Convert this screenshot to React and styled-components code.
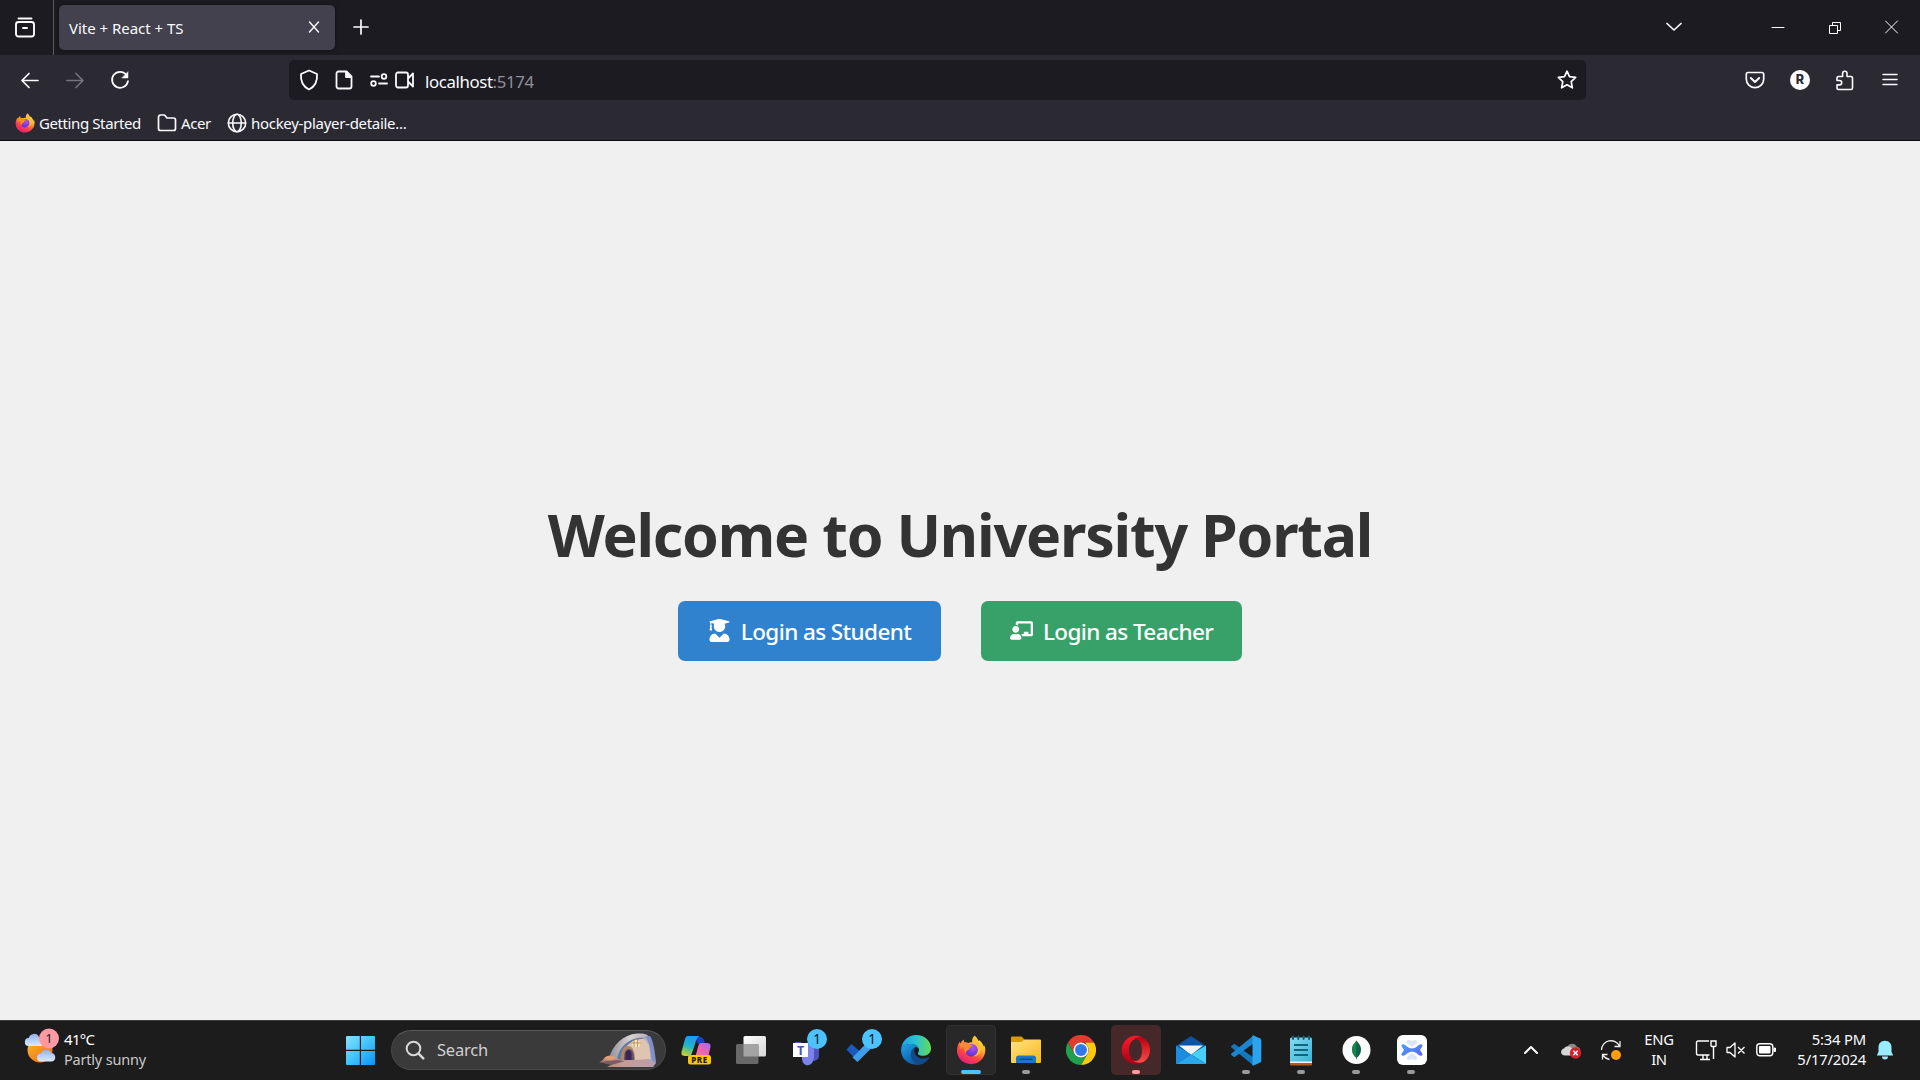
import React from 'react';
import styled, { createGlobalStyle } from 'styled-components';
import { FaUserGraduate, FaChalkboardTeacher } from 'react-icons/fa';

const GlobalStyle = createGlobalStyle`
  * { box-sizing: border-box; }
  body { margin: 0; background: #f0f0f0; font-family: "Noto Sans", "Open Sans", sans-serif; }
  svg { display: block; flex: none; }
`;

const Screen = styled.div`
  width: 1920px;
  height: 1080px;
  display: flex;
  flex-direction: column;
  overflow: hidden;
`;

const Label = styled.span`
  font-size: ${(p) => p.$size || 15}px;
  letter-spacing: ${(p) => p.$track || 0}px;
  line-height: ${(p) => p.$line || 20}px;
  color: ${(p) => p.$color || '#fbfbfe'};
  white-space: nowrap;
`;

/* ---------- browser chrome ---------- */
const TabStrip = styled.header`
  height: 55px;
  flex: none;
  display: flex;
  align-items: center;
  background: #1c1b22;
`;
const Cell = styled.div`
  width: ${(p) => p.$w}px;
  height: ${(p) => p.$h || 40}px;
  flex: none;
  display: flex;
  align-items: center;
  justify-content: center;
`;
const TopCell = styled(Cell)`
  padding-bottom: 1px;
`;
const ViewCell = styled(Cell)`
  height: 55px;
  padding-right: 3px;
  border-right: 1px solid #5b5a63;
`;
const Tab = styled.div`
  width: 276px;
  height: 45px;
  margin-left: 5px;
  padding: 0 11px 0 10px;
  border-radius: 5px;
  display: flex;
  align-items: center;
  justify-content: space-between;
  background: #42414d;
  box-shadow: 0 0 4px rgba(0, 0, 0, 0.5);
`;
const Spacer = styled.div`
  flex: 1;
`;
const NavBar = styled.nav`
  height: 50px;
  flex: none;
  display: flex;
  align-items: center;
  padding-left: 7px;
  padding-right: 9px;
  background: #2b2a33;
`;
const UrlBar = styled.div`
  width: 1297px;
  height: 40px;
  margin-left: 147px;
  padding-left: 2px;
  border-radius: 5px;
  display: flex;
  align-items: center;
  background: #1c1b22;
`;
const Url = styled(Label)`
  margin-left: 13px;
  padding-top: 3px;
  span { color: #8f8f98; }
`;
const Bookmarks = styled.div`
  height: 36px;
  flex: none;
  display: flex;
  align-items: flex-start;
  padding: 8px 0 0 15px;
  gap: 16px;
  background: #2b2a33;
  border-bottom: 1px solid #0c0c0d;
`;
const Bookmark = styled.div`
  display: flex;
  align-items: center;
  height: 20px;
  gap: 4px;
  width: ${(p) => p.$w}px;
`;

/* ---------- page ---------- */
const Page = styled.main`
  flex: 1;
  display: flex;
  flex-direction: column;
  align-items: center;
  padding-top: 348px;
  background: #f0f0f0;
`;
const Title = styled.h1`
  margin: 0;
  font-size: 59px;
  line-height: 90px;
  font-weight: 700;
  letter-spacing: -1.2px;
  color: #333;
  white-space: nowrap;
`;
const Actions = styled.div`
  display: flex;
  gap: 40px;
  margin-top: 22px;
`;
const LoginButton = styled.button`
  width: ${(p) => p.$w}px;
  height: 60px;
  padding: 0;
  border: 0;
  border-radius: 7px;
  display: flex;
  align-items: center;
  justify-content: center;
  gap: 10px;
  background: ${(p) => p.$bg};
  color: #fff;
  font: 500 22.5px/30px "Noto Sans", "Open Sans", sans-serif;
  letter-spacing: -0.6px;
  white-space: nowrap;
  svg { margin-bottom: 1px; }
  span { padding-top: 2px; }
`;

/* ---------- taskbar ---------- */
const Taskbar = styled.footer`
  height: 60px;
  flex: none;
  display: flex;
  align-items: center;
  background: #1c1c1c;
  box-shadow: inset 0 1px 0 #3b3c3b;
`;
const Weather = styled.div`
  width: 335px;
  padding-left: 24px;
  display: flex;
  align-items: center;
  gap: 4px;
  > svg { margin-bottom: 9px; }
`;
const Stack = styled.div`
  display: flex;
  flex-direction: column;
  padding-bottom: 3px;
  align-items: ${(p) => p.$align || 'flex-start'};
  width: ${(p) => (p.$w ? p.$w + 'px' : 'auto')};
`;
const Search = styled.div`
  width: 275px;
  height: 40px;
  margin: 0 5px 0 6px;
  padding: 0 8px 0 13px;
  border-radius: 20px;
  border: 1px solid #484848;
  border-top-color: #5a5a5a;
  display: flex;
  align-items: center;
  background: #3a3a3a;
`;
const SearchText = styled(Label)`
  margin-left: 12px;
  flex: 1;
`;
const Apps = styled.div`
  display: flex;
  gap: 5px;
`;
const AppTile = styled.div`
  position: relative;
  width: 50px;
  height: 50px;
  border-radius: 5px;
  display: flex;
  align-items: center;
  justify-content: center;
  background: ${(p) => p.$bg || 'transparent'};
  box-shadow: ${(p) => (p.$ring ? 'inset 0 0 0 1px #333' : 'none')};
`;
const Running = styled.i`
  position: absolute;
  bottom: 1px;
  left: 50%;
  width: ${(p) => p.$w || 8}px;
  height: 4px;
  border-radius: 2px;
  transform: translateX(-50%);
  background: ${(p) => p.$c || '#9a9a9a'};
`;
const Tray = styled.div`
  margin-left: 75px;
  display: flex;
  align-items: center;
`;

const Line = ({ w, h = w, vb, sw = 1.6, color = '#fbfbfe', children }) => (
  <svg width={w} height={h} viewBox={vb || `0 0 ${w} ${h}`} fill="none" stroke={color} strokeWidth={sw} strokeLinecap="round" strokeLinejoin="round">
    {children}
  </svg>
);

const Firefox = ({ size, id }) => (
  <svg width={size} height={size} viewBox="0 0 30 30">
    <defs>
      <linearGradient id={id + 'a'} x1=".8" y1="0" x2=".25" y2="1">
        <stop offset="0" stopColor="#fff44f" />
        <stop offset=".35" stopColor="#ffb02e" />
        <stop offset=".65" stopColor="#ff4a3f" />
        <stop offset="1" stopColor="#e31587" />
      </linearGradient>
      <radialGradient id={id + 'b'} cx=".6" cy=".3" r=".8">
        <stop offset="0" stopColor="#a655f5" />
        <stop offset="1" stopColor="#592acb" />
      </radialGradient>
    </defs>
    <path fill={`url(#${id}a)`} d="M18.7.8c2 1.7 3 3.2 3.7 5.3l1-.8c2.2 2 3.8 4.200 4.700 7 .3-.8.3-1.500.2-2.400 1 2 1.200 4.200.9 6.700C28.400 24 22.500 29.200 15 29.200 7.300 29.200 1 23.600 1 15.600c0-3.700 1.100-6.500 2.800-9 0 .9.1 1.600.4 2.200C5.200 7 6.300 5.600 7.700 4.600c-.1 1 .2 2 .8 2.900 1.400-.2 2.600 0 3.700.5 1.500-.8 3-.9 4.300-.6-.4-2.800.4-5 2.200-6.600z" />
    <circle cx="15.500" cy="15.300" r="6.300" fill={`url(#${id}b)`} />
    <path fill="#ff8a28" d="M3.800 8.600c3-2 6.200-1.700 8.400-.6 1 1.300 2.400 2 4.600 2.300-.3 1.400-2.700 1.700-3.300 2.600-.4.700 0 1.500-1.200 2.100-1.400.700-2.500 1.400-2.300 3.200-2.500-2-2.200-4.200-1-6-1.900-.2-3.400.4-4.600 2z" />
    <path fill="#ffbd35" d="M16.500 7.400c3.700 1 5.700 4 5.500 7.800-.1 3-2.500 5.400-5.500 6 5 .4 8.700-3 8.600-7.300-.1-3.600-2-5.800-3.900-7.700C20.600 4.700 20.100 3 18.700.8c-1.800 1.600-2.800 3.800-2.200 6.600z" />
  </svg>
);

const WeatherIcon = () => (
  <svg width="36" height="38" viewBox="0 0 36 38">
    <defs>
      <linearGradient id="sun" x1="0" y1="0" x2="1" y2="1"><stop stopColor="#f9bd2b" /><stop offset="1" stopColor="#ee6414" /></linearGradient>
      <linearGradient id="cl" x1="0" y1="0" x2="0" y2="1"><stop stopColor="#8fb2ee" /><stop offset="1" stopColor="#dfeafb" /></linearGradient>
    </defs>
    <circle cx="16" cy="23" r="12.500" fill="url(#sun)" />
    <path fill="url(#cl)" d="M5 19a4 4 0 0 1-.3-8A5.500 5.500 0 0 1 15 10l4 9z" />
    <path fill="url(#cl)" d="M17 34.500a4 4 0 0 1 0-8 5.500 5.500 0 0 1 10.300-.5 4.300 4.300 0 0 1 .5 8.500z" />
    <circle cx="25" cy="11.500" r="10" fill="#ff99a4" />
    <text x="25" y="16.200" textAnchor="middle" fontSize="13" fill="#222" fontFamily="Noto Sans, sans-serif">1</text>
  </svg>
);

const StartIcon = () => (
  <svg width="30" height="30" viewBox="0 0 30 30">
    <defs><linearGradient id="win" gradientUnits="userSpaceOnUse" x1="0" y1="0" x2="30" y2="30"><stop stopColor="#8be3ff" /><stop offset=".5" stopColor="#42c5fb" /><stop offset="1" stopColor="#0a93f8" /></linearGradient></defs>
    <path fill="url(#win)" d="M1 2a1 1 0 0 1 1-1H14.800V14.800H1zM16 1H29a1 1 0 0 1 1 1V14.800H16zM1 16H14.800V30H2a1 1 0 0 1-1-1zM16 16H30V29a1 1 0 0 1-1 1H16z" />
  </svg>
);

const DomeArt = () => (
  <svg width="58" height="34" viewBox="0 0 58 34">
    <defs>
      <linearGradient id="dome" x1="0" y1="0" x2="1" y2="0"><stop stopColor="#8f8f9c" /><stop offset=".45" stopColor="#d9d0d0" /><stop offset=".75" stopColor="#bfb4bd" /><stop offset="1" stopColor="#8798cf" /></linearGradient>
      <linearGradient id="sand" x1="0" y1="0" x2="1" y2="0"><stop stopColor="#b97c5d" /><stop offset=".4" stopColor="#c59b94" /><stop offset="1" stopColor="#b79fae" /></linearGradient>
    </defs>
    <path fill="url(#dome)" d="M10 25C14 12 24 1.500 38 .5c10-.5 12.500 1 14 9l5 20-7 1z" />
    <path fill="#667aa6" d="M18 27C20 11 34 3 47 5c-8 1-14 6-17 11l-5 11z" />
    <path fill="#dfc4b2" d="M22 28C23 14 33 5 45 6l5 6 2 17z" />
    <path fill="#7f90c9" d="M46 4c4 3 5 9 7 23l4 3c-1-12-3-23-6-27z" />
    <path fill="#b3885f" d="M22 28c0-9 2-15 7-15s7 6 7 15z" />
    <path fill="#5b5474" d="M25 27c0-7 1-11 5-11s5 4 5 11z" />
    <path fill="#3e2450" d="M26.500 27v-6c0-5 6-5 6 0v6z" />
    <path fill="#f5e6c2" d="M32 9.500l5-3 5 3-2 4.500h-6z" />
    <path stroke="#b88c50" strokeWidth=".9" fill="none" d="M32 10h10M35 7v7M38.500 7v7" />
    <path fill="url(#sand)" d="M0 29c4 0 4-5 9-6 6-1 8 3 13 4h14l14-1 7 4-3 4H8l6-3z" />
    <path fill="#7c5a66" d="M0 29l18-2 8 1-14 4z" />
    <path fill="#e2a079" d="M5 26c2-4 8-4 12-1l-5 2z" />
  </svg>
);

const Copilot = () => (
  <svg width="34" height="34" viewBox="0 0 34 34">
    <defs>
      <linearGradient id="cp1" x1="0.300" y1="0" x2="0" y2="1"><stop stopColor="#1b9cf0" /><stop offset=".45" stopColor="#21b6c4" /><stop offset=".75" stopColor="#8ace50" /><stop offset="1" stopColor="#f3cb28" /></linearGradient>
      <linearGradient id="cp2" x1="1" y1="0" x2="0" y2="1"><stop stopColor="#a06bf5" /><stop offset=".5" stopColor="#ef62b4" /><stop offset="1" stopColor="#ff8a4a" /></linearGradient>
    </defs>
    <path fill="#1543c4" d="M16 4h5c3 0 4 2 5 7h-7z" />
    <path fill="url(#cp1)" d="M9 3h12c-3 1-4 4-5 8l-3 9c-.6 2-2 3-4 3H6c-4 0-4-3-3-6L6 6c.5-2 1.500-3 3-3z" />
    <path fill="url(#cp2)" d="M22 10h6c4 0 4 3 3 6l-2 9H14c3-1 3-4 4-7 1-5 2-8 4-8z" />
    <rect x="9" y="22" width="23" height="9.500" rx="2.500" fill="#ffc800" />
    <text x="20.500" y="29.800" textAnchor="middle" fontSize="8" fontWeight="800" letterSpacing=".5" fill="#221a00" fontFamily="Noto Sans, sans-serif">PRE</text>
  </svg>
);

const TaskView = () => (
  <svg width="32" height="30" viewBox="0 0 32 30">
    <defs><linearGradient id="tv" x1="0" y1="0" x2="1" y2="1"><stop stopColor="#fff" /><stop offset="1" stopColor="#d5d5d5" /></linearGradient></defs>
    <rect x="8.500" y="1" width="22.500" height="20.500" rx="1.500" fill="url(#tv)" />
    <rect x="1" y="9" width="22.500" height="20" rx="1.500" fill="#686868" />
    <path fill="#a4a4a4" d="M8.500 9h15v12.500h-15z" />
  </svg>
);

const CountBadge = ({ x, y }) => (
  <g>
    <circle cx={x} cy={y} r="10" fill="#4cc2ff" />
    <text x={x} y={y + 5} textAnchor="middle" fontSize="13.500" fill="#111" fontFamily="Noto Sans, sans-serif">1</text>
  </g>
);

const Teams = () => (
  <svg width="50" height="50" viewBox="0 0 50 50">
    <path fill="#4b53bc" d="M29 21h9v10c0 3-3 5-7 5z" />
    <path fill="#7b83eb" d="M20 19h13v12c0 12-12 12-12 2z" />
    <rect x="14" y="17" width="6" height="4" fill="#5059c9" />
    <rect x="12" y="18" width="15" height="14" fill="#fff" />
    <text x="19.500" y="29.600" textAnchor="middle" fontSize="12.500" fontWeight="700" fill="#4b53bc" fontFamily="Noto Sans, sans-serif">T</text>
    <CountBadge x={36} y={14} />
  </svg>
);

const Todo = () => (
  <svg width="50" height="50" viewBox="0 0 50 50">
    <path fill="#185abd" d="M15.500 19l-5 5.500 7 7.500 6-6z" />
    <path fill="#3e9eea" d="M16.500 32.500l18-18.500 6 4L21.500 37z" />
    <CountBadge x={36} y={14} />
  </svg>
);

const Edge = () => (
  <svg width="30" height="30" viewBox="0 0 30 30">
    <defs>
      <linearGradient id="e1" x1="0" y1=".5" x2="1" y2=".5"><stop stopColor="#1aa0e8" /><stop offset=".5" stopColor="#2bc3d2" /><stop offset="1" stopColor="#66dc4f" /></linearGradient>
      <linearGradient id="e2" x1="0" y1="0" x2=".6" y2="1"><stop stopColor="#1fa2e9" /><stop offset="1" stopColor="#0c59a4" /></linearGradient>
    </defs>
    <path fill="url(#e1)" d="M.2 13.500C1.200 5.500 7.500 0 15 0c9 0 15 6.300 15 13.200 0 4.600-3.600 7.600-8 7.600-4 0-5.500-1.600-5-2.700.5-1 1-1.500 1-3 0-3.400-3.500-6.100-7.700-6.100C5.500 9 1.700 10.500.2 13.500z" />
    <path fill="url(#e2)" d="M.1 13.800C1.200 10 5.500 8.900 10.300 8.900c4.200 0 7.700 2.700 7.700 6.200 0-2-2-3-3.500-3-5 3-6 15 5 17.400C9 31.500-.9 24.500.1 13.800z" />
    <path fill="#114a8b" d="M14 12.200C7.500 15 8 27.500 18 29.700c4-.4 8-3 10-6.700.3-.6-.2-1-.8-.700-7 3.600-16.500-1-13.200-10.100z" />
  </svg>
);

const Files = () => (
  <svg width="32" height="28" viewBox="0 0 32 28">
    <defs><linearGradient id="fo" x1="0" y1="0" x2="1" y2="1"><stop stopColor="#ffe287" /><stop offset="1" stopColor="#fcb814" /></linearGradient></defs>
    <path fill="#d99a0b" d="M1 1.500a1 1 0 0 1 1-1h9.500l3 3V9H1z" />
    <path fill="url(#fo)" d="M1 6h10.500l3-2.500H30a1 1 0 0 1 1 1V26a1 1 0 0 1-1 1H2a1 1 0 0 1-1-1z" />
    <path fill="#1578c8" d="M6 27v-5a2.500 2.500 0 0 1 2.500-2.500h15A2.500 2.500 0 0 1 26 22v5z" />
    <rect x="9.500" y="22.500" width="13" height="1.500" fill="#0b4d86" />
  </svg>
);

const Chrome = () => (
  <svg width="30" height="30" viewBox="0 0 30 30">
    <path fill="#e33b2e" d="M2 7.500A15 15 0 0 1 28 7.500H15L8.500 18.700z" />
    <path fill="#fdc80f" d="M28 7.500A15 15 0 0 1 15 30l6.500-11.200a7.500 7.500 0 0 0 0-7.500L19 7.500z" />
    <path fill="#1fa04c" d="M15 30A15 15 0 0 1 2 7.500l6.500 11.300A7.500 7.500 0 0 0 15 22.500a7.500 7.500 0 0 0 6.500-3.700z" />
    <circle cx="15" cy="15" r="7.500" fill="#fff" />
    <circle cx="15" cy="15" r="6" fill="#3279ec" />
  </svg>
);

const Opera = () => (
  <svg width="30" height="30" viewBox="0 0 30 30">
    <defs>
      <linearGradient id="op" x1="0" y1="0" x2="0" y2="1"><stop stopColor="#ff1b2d" /><stop offset="1" stopColor="#a70014" /></linearGradient>
      <linearGradient id="op2" x1="0" y1="0" x2="0" y2="1"><stop stopColor="#b9000f" /><stop offset="1" stopColor="#ff4b4b" /></linearGradient>
    </defs>
    <path fill="url(#op)" fillRule="evenodd" d="M15 .7a14.300 14.300 0 1 0 0 28.600c3 0 6-1 8-3V4c-2-2-5-3.300-8-3.300zM16 3.700c4 0 6.500 5 6.500 11.300S20 26.300 16 26.300 8 21.500 8 15 12 3.700 16 3.700z" />
    <path fill="url(#op2)" d="M12 4.500c5-4 10-2 12.500 0a14.300 14.300 0 0 1 0 21c-3.500 3-8.500 3-12.500 0 7 2 9-4 9-10.500S18 2.500 12 4.500z" />
  </svg>
);

const Mail = () => (
  <svg width="30" height="28" viewBox="0 0 30 28">
    <path fill="#0a54a4" d="M0 10L15 0l15 10-6 7H6z" />
    <path fill="#f3f3f3" d="M3 9.500h24L15 19z" />
    <path fill="#1585d9" d="M0 9.500l15 9L0 28z" />
    <path fill="#47d0f8" d="M30 9.500l-15 9L30 28z" />
    <path fill="#2aa6ea" d="M0 28l15-9.500L30 28z" />
    <path fill="#1c8ddf" d="M0 10v18l15-9.500z" />
  </svg>
);

const Code = () => (
  <svg width="31" height="31" viewBox="0 0 31 31">
    <path fill="#1377bd" d="M2.200 9.400L.4 11c-.5.5-.5 1.200 0 1.600L22.500 30.500V22.500L4 9.300c-.6-.4-1.200-.4-1.800.1z" />
    <path fill="#1a86cf" d="M2.200 21.600L.4 20c-.5-.5-.5-1.200 0-1.600L22.500.5V8.500L4 21.700c-.6.4-1.200.4-1.800-.1z" />
    <path fill="#2ba4ef" d="M22.500.4l6.700 3.100c.7.300 1.100 1 1.100 1.700v20.600c0 .7-.4 1.400-1.100 1.700l-6.700 3.100c-.7.200-1-.2-1-.8V1.200c0-.6.300-1 1-.8z" />
  </svg>
);

const Notepad = () => (
  <svg width="24" height="31" viewBox="0 0 24 31">
    <defs><linearGradient id="np" x1="0" y1="0" x2="1" y2="1"><stop stopColor="#83dbf0" /><stop offset="1" stopColor="#3cb4d8" /></linearGradient></defs>
    <path fill="#b05a1c" d="M1 25h22v4.500a1 1 0 0 1-1 1H2a1 1 0 0 1-1-1z" />
    <path fill="#f4f4f4" d="M1 25h22v3H1z" />
    <path fill="url(#np)" d="M1 4a1.500 1.500 0 0 1 1.500-1.500h19A1.500 1.500 0 0 1 23 4v22.500H1z" />
    <path stroke="#11667f" strokeWidth="2" d="M5 10h14M5 15h14M5 20h14" />
    <path stroke="#155f77" strokeWidth="2" strokeLinecap="round" d="M4 1.500v2.500M9.300 1.500v2.500M14.600 1.500v2.500M20 1.500v2.500" />
  </svg>
);

const Mongo = () => (
  <svg width="30" height="30" viewBox="0 0 30 30">
    <circle cx="15.500" cy="15" r="14" fill="#fbfbfb" />
    <path fill="#116149" d="M15.500 5.500c1 2 4.500 4 4.500 9 0 4-2 6.500-4 8l-.5 2.500-.5-2.500c-2-1.500-4-4-4-8 0-5 3.500-7 4.500-9z" />
    <path fill="#13aa52" opacity=".5" d="M15.500 5.500c-1 2-4.500 4-4.500 9 0 4 2 6.500 4 8z" />
  </svg>
);

const Bone = () => (
  <svg width="32" height="30" viewBox="-2 0 32 30">
    <defs><linearGradient id="bo" x1="0" y1="0" x2="1" y2="1"><stop stopColor="#4aa5fb" /><stop offset="1" stopColor="#5c63f2" /></linearGradient></defs>
    <rect width="30" height="30" rx="6" fill="#fff" />
    <path fill="#d8e5fb" d="M15 12l-5-4c-1-3 3-4 5-1.500C17 4 21 5 20 8zM15 18l-5 4c-1 3 3 4 5 1.500C17 26 21 25 20 22z" />
    <path fill="url(#bo)" d="M5 9.500c2-1 3.500.5 5 2 3 2.500 7 2.500 10 0 1.500-1.500 3-3 5-2 1.500 1.500-.5 3-1.500 4.500-.4.700-.4 1.300 0 2 1 1.500 3 3 1.500 4.500-2 1-3.500-.5-5-2-3-2.500-7-2.500-10 0-1.500 1.500-3 3-5 2-1.500-1.500.5-3 1.500-4.500.4-.7.400-1.300 0-2-1-1.500-3-3-1.500-4.500z" />
  </svg>
);

const apps = [
  { icon: <Copilot /> },
  { icon: <TaskView /> },
  { icon: <Teams /> },
  { icon: <Todo /> },
  { icon: <Edge /> },
  { icon: <Firefox size={30} id="fft" />, bg: '#282828', ring: true, run: { w: 20, c: '#4cc2ff' } },
  { icon: <Files />, run: {} },
  { icon: <Chrome /> },
  { icon: <Opera />, bg: '#452829', run: { c: '#ff99a4' } },
  { icon: <Mail /> },
  { icon: <Code />, run: {} },
  { icon: <Notepad />, run: {} },
  { icon: <Mongo />, run: {} },
  { icon: <Bone />, run: {} },
];

export default function App() {
  return (
    <Screen>
      <GlobalStyle />
      <TabStrip>
        <ViewCell $w={54}>
          <Line w={20} h={21} sw={1.9}>
            <path d="M3.500 1.500h13" />
            <rect x="1" y="5" width="18" height="14.500" rx="2.500" />
            <path d="M8 11h4" />
          </Line>
        </ViewCell>
        <Tab>
          <Label $size={15} $track={-0.03}>Vite + React + TS</Label>
          <TopCell $w={20}><Line w={20} sw={1.4}><path d="M5.500 5l9 10M14.500 5l-9 10" /></Line></TopCell>
        </Tab>
        <TopCell $w={52}><Line w={18} sw={1.7}><path d="M9 2v14M2 9h14" /></Line></TopCell>
        <Spacer />
        <TopCell $w={40}><Line w={18} sw={1.7}><path d="M2 5.500l7 6.500 7-6.500" /></Line></TopCell>
        <Cell $w={55} />
        <Cell $w={57}><Line w={14} sw={1}><path d="M1 6.500h12" /></Line></Cell>
        <Cell $w={57}>
          <svg width="14" height="14" fill="none" stroke="#fff"><path d="M1.500 4.500h8v8h-8zM4.500 4.500v-3h8v8h-3" /></svg>
        </Cell>
        <TopCell $w={57}><Line w={14} sw={1}><path d="M.5 1l12 12M12.500 1L.5 13" /></Line></TopCell>
      </TabStrip>

      <NavBar>
        <Cell $w={45}><Line w={20} sw={1.7}><path d="M18 10.500H2.500M9 3.500l-7 7 7 7" /></Line></Cell>
        <Cell $w={45}><Line w={20} sw={1.7} color="#75747b"><path d="M2 10.500h15.500M11 3.500l7 7-7 7" /></Line></Cell>
        <Cell $w={45}>
          <Line w={20} sw={1.7}><path d="M16.500 5A8 8 0 1 0 18 11" /><path d="M18 2v6h-6z" fill="#fbfbfe" strokeWidth=".5" /></Line>
        </Cell>
        <UrlBar>
          <Cell $w={36}><Line w={20} h={22} sw={1.8}><path d="M10 1.500l8 3.500c.6 7-2 12.500-8 15.500C4 17.500 1.400 12 2 5z" /></Line></Cell>
          <Cell $w={34}>
            <Line w={18} h={20} sw={1.8}><path d="M3.500 1.500h8l5 5v10a2 2 0 0 1-2 2h-11a2 2 0 0 1-2-2v-13a2 2 0 0 1 2-2z" /><path d="M11 2v5h5z" fill="#fbfbfe" /></Line>
          </Cell>
          <Cell $w={36}>
            <Line w={20} h={16} sw={1.8}><path d="M2 4.500h8M10 11.500h8" /><circle cx="15" cy="4.500" r="2.300" /><circle cx="4.500" cy="11.500" r="2.300" /></Line>
          </Cell>
          <Cell $w={15}>
            <Line w={20} h={18} sw={1.8}><rect x="1" y="1.500" width="12" height="15" rx="2" /><path d="M13.500 7l4.500-4.500v13L13.500 11" /></Line>
          </Cell>
          <Url $size={16.8} $track={-0.37}>localhost<span>:5174</span></Url>
          <Spacer />
          <Cell $w={38}>
            <Line w={20} vb="0 0 20 20" sw={1.7}><path d="M10 1.200l2.500 5.500 6.200.700-4.500 4.200 1.200 6.200-5.400-3-5.400 3 1.200-6.200L1.300 7.400l6.200-.700z" /></Line>
          </Cell>
        </UrlBar>
        <Spacer />
        <Cell $w={45}>
          <Line w={20} sw={1.7}><path d="M3 2.500h14a1.700 1.700 0 0 1 1.700 1.700V9A8.700 8.700 0 0 1 1.300 9V4.200A1.700 1.700 0 0 1 3 2.500z" /><path d="M5.800 8l4.200 4 4.200-4" strokeWidth="2" /></Line>
        </Cell>
        <Cell $w={45}>
          <svg width="20" height="20"><circle cx="10" cy="10" r="10" fill="#fbfbfe" /><text x="10" y="14.300" textAnchor="middle" fontSize="12.500" fontWeight="800" fill="#2b2a33" fontFamily="Inter, sans-serif">R</text></svg>
        </Cell>
        <Cell $w={46}>
          <Line w={20} h={21} sw={1.6}><path d="M3.500 19.500h12.500a1.500 1.500 0 0 0 1.500-1.500V8a1.500 1.500 0 0 0-1.500-1.500h-4V3.500a2.200 2.200 0 0 0-4.400 0v3H3.500A1.500 1.500 0 0 0 2 8v2.500h2.500a2.200 2.200 0 0 1 0 4.400H2V18a1.500 1.500 0 0 0 1.500 1.500z" /></Line>
        </Cell>
        <Cell $w={43}><Line w={18} sw={1.5}><path d="M2 3.500h14M2 8.500h14M2 13.500h14" /></Line></Cell>
      </NavBar>

      <Bookmarks>
        <Bookmark $w={126}><Firefox size={20} id="ffb" /><Label $track={-0.4}>Getting Started</Label></Bookmark>
        <Bookmark $w={54}>
          <Line w={20} sw={1.7}><path d="M1.500 4a2 2 0 0 1 2-2h4l2.500 3h6.500a2 2 0 0 1 2 2v8.500a2 2 0 0 1-2 2h-13a2 2 0 0 1-2-2z" /></Line>
          <Label $track={-0.4}>Acer</Label>
        </Bookmark>
        <Bookmark>
          <Line w={20} sw={1.6}><circle cx="10" cy="10" r="8.700" /><ellipse cx="10" cy="10" rx="4.300" ry="8.700" /><path d="M1.500 10h17" /></Line>
          <Label $track={-0.3}>hockey-player-detaile...</Label>
        </Bookmark>
      </Bookmarks>

      <Page>
        <Title>Welcome to University Portal</Title>
        <Actions>
          <LoginButton $w={263} $bg="#3182ce"><FaUserGraduate size={23} /><span>Login as Student</span></LoginButton>
          <LoginButton $w={261} $bg="#38a169"><FaChalkboardTeacher size={23} /><span>Login as Teacher</span></LoginButton>
        </Actions>
      </Page>

      <Taskbar>
        <Weather>
          <WeatherIcon />
          <Stack>
            <Label $size={15} $track={-0.7} $color="#fff">41°C</Label>
            <Label $size={14.5} $track={-0.2} $color="#c9c9c9">Partly sunny</Label>
          </Stack>
        </Weather>
        <Cell $w={50}><StartIcon /></Cell>
        <Search>
          <Line w={20} sw={2} color="#d8d8d8"><circle cx="8.500" cy="8.500" r="6.800" /><path d="M13.800 13.800l4.500 4.500" strokeWidth="2.500" /></Line>
          <SearchText $size={16.5} $track={-0.2} $color="#d0d0d0">Search</SearchText>
          <DomeArt />
        </Search>
        <Apps>
          {apps.map((a, i) => (
            <AppTile key={i} $bg={a.bg} $ring={a.ring}>
              {a.icon}
              {a.run && <Running $w={a.run.w} $c={a.run.c} />}
            </AppTile>
          ))}
        </Apps>
        <Tray>
          <Cell $w={40}><Line w={16} sw={2}><path d="M2 11l6-6 6 6" /></Line></Cell>
          <Cell $w={40}>
            <svg width="22" height="20" viewBox="0 0 22 20">
              <path fill="#8a8a8a" d="M7 8c1-5 8-6 10-1 3 0 4 3 3 6H9z" />
              <path fill="#d5d5d5" d="M5 15.500c-5 0-5-6-1-7 2-3 6-3 8 0l2 7z" />
              <circle cx="15.500" cy="13" r="5.700" fill="#d91f2e" />
              <path stroke="#fff" strokeWidth="1.400" d="M13.300 10.800l4.400 4.400M17.700 10.800l-4.400 4.400" />
            </svg>
          </Cell>
          <Cell $w={40}>
            <svg width="22" height="22" viewBox="0 0 22 22" fill="none" stroke="#eee" strokeWidth="1.300">
              <path d="M1.500 11A9.500 9.500 0 0 1 19.500 7M20 2v5.500h-5.500M2.500 20.500v-5h5M3 16.500c2 2.500 4 3.500 6.500 4" />
              <circle cx="16" cy="16" r="5" fill="#ff9d0a" stroke="none" />
            </svg>
          </Cell>
          <Stack $w={56} $align="center">
            <Label $size={14.8} $track={-0.3}>ENG</Label>
            <Label $size={14.8} $track={-0.3}>IN</Label>
          </Stack>
          <Cell $w={38}>
            <svg width="22" height="22" viewBox="0 0 22 22" fill="none" stroke="#fff" strokeWidth="1.400">
              <path d="M14 2H3a1.500 1.500 0 0 0-1.500 1.500v11A1.500 1.500 0 0 0 3 16h11.500M8 16v4M12 16v4M5 20.500h10M16 2h5v4.500a1 1 0 0 1-1 1h-3a1 1 0 0 1-1-1zM18.500 8v12" />
            </svg>
          </Cell>
          <Cell $w={22}>
            <svg width="20" height="18" viewBox="0 0 20 18" fill="none" stroke="#fff" strokeWidth="1.300" strokeLinejoin="round">
              <path d="M1 6.500h3l5-4.500v14l-5-4.500H1zM12 6l6.500 6.500M18.500 6L12 12.500" />
            </svg>
          </Cell>
          <Cell $w={38}>
            <svg width="20" height="16" viewBox="0 0 20 16">
              <rect x=".8" y="1.800" width="16" height="12" rx="3" fill="none" stroke="#fff" strokeWidth="1.400" />
              <rect x="3" y="4" width="11.500" height="7.600" rx="1" fill="#fff" />
              <path fill="#fff" d="M17.500 5.500h1a1.500 1.500 0 0 1 0 4.500h-1z" />
            </svg>
          </Cell>
          <Stack $w={81} $align="flex-end">
            <Label $size={14.8} $track={-0.18}>5:34 PM</Label>
            <Label $size={14.8} $track={-0.18}>5/17/2024</Label>
          </Stack>
          <Cell $w={38}>
            <svg width="18" height="20" viewBox="0 0 18 20"><path fill="#99ebff" d="M9 .8c4 0 6.500 2.900 6.500 6.500v4.500l1.700 3.700H.8l1.700-3.700V7.300C2.500 3.700 5 .8 9 .8zM6 16.500h6a3 3 0 0 1-6 0z" /></svg>
          </Cell>
        </Tray>
      </Taskbar>
    </Screen>
  );
}
